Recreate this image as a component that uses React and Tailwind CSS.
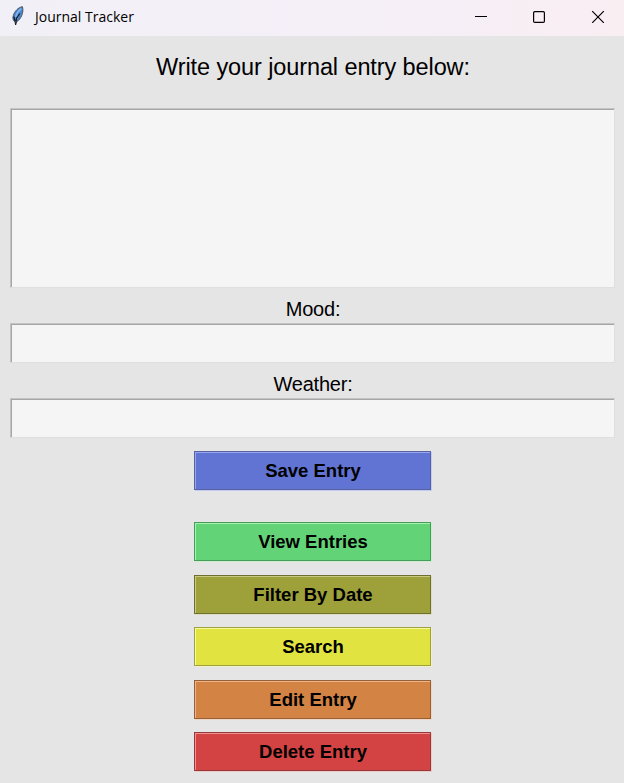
import React from "react";

const actions = [
  { label: "Save Entry", cls: "mb-[32px] h-[39px] bg-[#6174d3] border-[#56639f] shadow-[inset_1px_1px_0_#98a6f0,1px_1px_0_#c3cbf5]" },
  { label: "View Entries", cls: "mb-[14px] h-[39px] bg-[#62d477] border-[#4a9a59] shadow-[inset_1px_1px_0_#a3f3ae,1px_1px_0_#c8f0ce]" },
  { label: "Filter By Date", cls: "mb-[13px] h-[39px] bg-[#9ea039] border-[#6f7030] shadow-[inset_1px_1px_0_#c8ca82,1px_1px_0_#dcdcc0]" },
  { label: "Search", cls: "mb-[14px] h-[39px] bg-[#e1e341] border-[#9fa040] shadow-[inset_1px_1px_0_#fafb9c,1px_1px_0_#f0f1c4]" },
  { label: "Edit Entry", cls: "mb-[13px] h-[39px] bg-[#d38343] border-[#946038] shadow-[inset_1px_1px_0_#f0b48c,1px_1px_0_#efd5c4]" },
  { label: "Delete Entry", cls: "h-[39px] bg-[#d34343] border-[#943a3a] shadow-[inset_1px_1px_0_#f09090,1px_1px_0_#efc8c8]" },
];

function Field({ className }) {
  return (
    <div className={"ml-px w-[605px] border border-t-[#c3c3c3] border-l-[#c3c3c3] border-r-[#dfdfdf] border-b-[#dfdfdf] bg-[#f5f5f5] shadow-[inset_1px_1px_0_#a6a6a6] " + className} />
  );
}

function Feather() {
  return (
    <svg width="14" height="20" viewBox="0 0 14 20" className="mb-[4px] ml-[11px]">
      <path d="M11.4 .7C7.4 1.2 3.2 5.4 2.1 10.3C1.6 12.8 2.2 14.7 3.9 15.8L4.5 18.4L5.5 15.8C9.8 13.8 13.2 6 11.4 .7Z" fill="#4a86cf" stroke="#50555e" strokeWidth="1" />
      <path d="M10.2 2.6C7.6 4.6 5.6 7.7 4.6 11.2" fill="none" stroke="#7db4ec" strokeWidth="1.7" />
      <path d="M8.8 7.5L5.5 12.2L4.6 19M2.8 10.5L4 15" fill="none" stroke="#141b24" strokeWidth="1.2" />
    </svg>
  );
}

export default function App() {
  return (
    <div className="flex h-[783px] w-[624px] flex-col overflow-hidden bg-[#e5e5e5] font-['Liberation_Sans',Arial,sans-serif] text-black">
      <header className="flex h-9 shrink-0 items-center bg-linear-to-r from-[#f2f0f7] via-[#f5eff8] via-60% to-[#f9eef2]">
        <Feather />
        <span className="mb-[2px] ml-[10px] whitespace-nowrap font-['Open_Sans','Noto_Sans',sans-serif] text-[14px] leading-5">Journal Tracker</span>
        <svg width="134" height="14" viewBox="0 0 134 14" className="mr-[17px] mb-[4px] ml-auto" fill="none" stroke="#000">
          <path d="M2 7.5H14" />
          <rect x="60.6" y="2.6" width="10.8" height="10.8" rx="1.2" strokeWidth="1.2" />
          <path d="M119.2 2.2L130.8 13.8M130.8 2.2L119.2 13.8" strokeWidth="1.2" />
        </svg>
      </header>
      <main className="flex flex-col items-center">
        <h1 className="ml-[2px] flex h-[72px] items-start pt-[17px] text-[23.5px] leading-[28px] tracking-[-0.1px] whitespace-nowrap">Write your journal entry below:</h1>
        <Field className="h-[180px]" />
        <label className="ml-[2px] flex h-[35px] items-center pt-[6px] text-[20px] leading-6 tracking-[-0.2px]">Mood:</label>
        <Field className="h-[40px]" />
        <label className="ml-[2px] flex h-[35px] items-center pt-[6px] text-[20px] leading-6 tracking-[-0.2px]">Weather:</label>
        <Field className="mb-[13px] h-[40px]" />
        {actions.map((a) => (
          <button key={a.label} className={"flex w-[237px] items-center justify-center border pt-px pl-[2px] text-[18.5px] leading-none font-bold " + a.cls}>
            {a.label}
          </button>
        ))}
      </main>
    </div>
  );
}
